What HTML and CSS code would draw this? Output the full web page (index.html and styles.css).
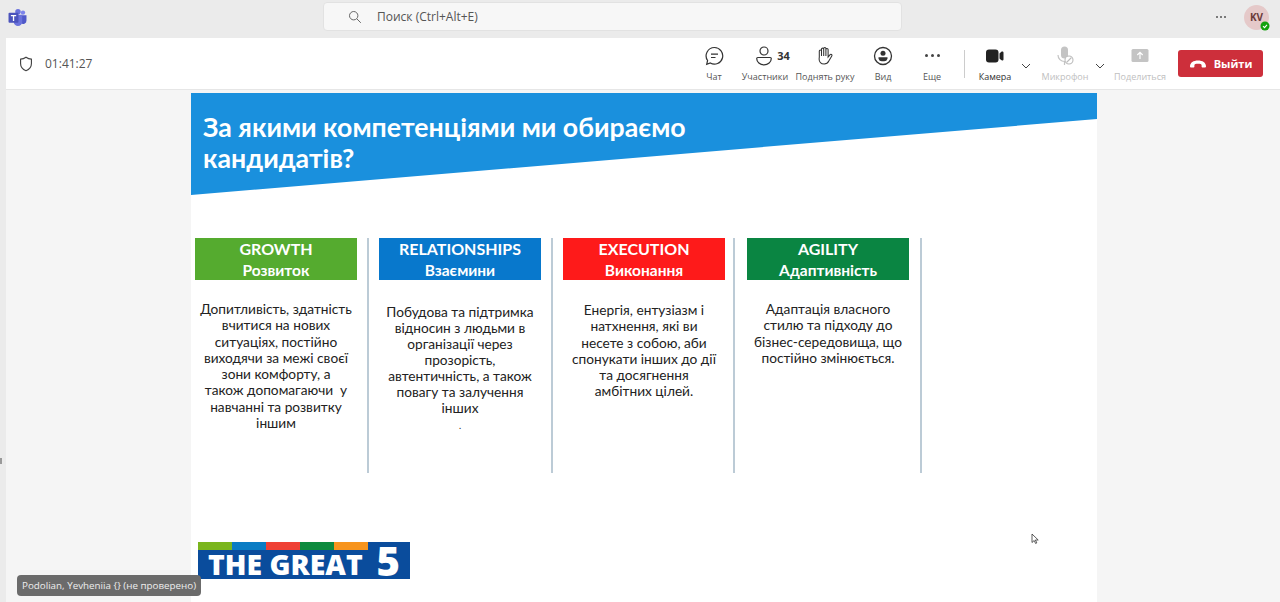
FILE: index.html
```html
<!DOCTYPE html>
<html lang="uk">
<head>
<meta charset="utf-8">
<title>Teams</title>
<link rel="stylesheet" href="styles.css">
</head>
<body>
<header class="topbar">
  <svg class="teams-logo" viewBox="0 0 20 18" width="19" height="17">
    <circle cx="15.800" cy="3.800" r="2.300" fill="#7b83eb"/>
    <circle cx="10.500" cy="3" r="2.900" fill="#6a72dc"/>
    <path d="M12 6.500h7.500v5.700a3.400 3.400 0 0 1-6 2.400z" fill="#5059c9"/>
    <path d="M6 6.200h9v7.200a4.500 4.500 0 0 1-9 0z" fill="#6a72dc"/>
    <rect x="0.500" y="4" width="10.500" height="10.500" rx="1" fill="#4b53bc"/>
    <path d="M3 6.400h5.600v1.300H6.500v4.900H5.100V7.700H3z" fill="#fff"/>
  </svg>
  <div class="search">
    <svg class="search-icon" viewBox="0 0 14 14" width="14" height="14"><circle cx="5.700" cy="5.700" r="4.200" fill="none" stroke="#666" stroke-width="1"/><path d="M8.800 8.800l4 4" stroke="#666" stroke-width="1"/></svg>
    <span>Поиск (Ctrl+Alt+E)</span>
  </div>
  <div class="top-right">
    <span class="dots"><i></i><i></i><i></i></span>
    <div class="avatar">KV
      <svg class="presence" viewBox="0 0 10 10" width="10" height="10"><circle cx="5" cy="5" r="4.500" fill="#13a10e"/><path d="M3 5.200l1.500 1.400L7 3.800" fill="none" stroke="#fff" stroke-width="1.100"/></svg>
    </div>
  </div>
</header>
<div class="main">
  <section class="content">
    <div class="toolbar">
      <div class="timer">
        <svg viewBox="0 0 16 18" width="14" height="16"><path d="M8 1.200c2 1.500 4 2.200 6.200 2.300v5c0 4-2.400 6.800-6.200 8.200-3.800-1.400-6.200-4.200-6.200-8.200v-5C4 3.400 6 2.700 8 1.200z" fill="none" stroke="#444" stroke-width="1.300"/></svg>
        <span>01:41:27</span>
      </div>
      <div class="tools">
        <div class="tool w42">
          <svg viewBox="0 0 20 20" width="20" height="20"><path d="M10.500 1.500a8.300 8.300 0 1 1-4.200 15.500l-3.600 1.300.9-3.800A8.300 8.300 0 0 1 10.500 1.500z" fill="none" stroke="#333" stroke-width="1.200"/><path d="M7 8.200h7M7 11.500h4.500" stroke="#333" stroke-width="1.200"/></svg>
          <span>Чат</span>
        </div>
        <div class="tool w60">
          <div class="people">
            <svg viewBox="0 0 20 20" width="20" height="20"><circle cx="10" cy="5" r="4" fill="none" stroke="#333" stroke-width="1.200"/><path d="M3.800 11.500h12.400c.7 0 1.100.4 1.100 1.100 0 3.500-3.300 6.200-7.300 6.200s-7.300-2.700-7.300-6.200c0-.7.400-1.100 1.100-1.100z" fill="none" stroke="#333" stroke-width="1.200"/></svg>
            <b>34</b>
          </div>
          <span>Участники</span>
        </div>
        <div class="tool w60">
          <svg viewBox="0 0 20 20" width="20" height="20"><path d="M4.300 11V5a1.100 1.100 0 0 1 2.200 0V3.200a1.100 1.100 0 0 1 2.200 0v-.6a1.100 1.100 0 0 1 2.200 0v.9a1.100 1.100 0 0 1 2.200 0v7.500l1.800-2.200c1-1.200 2.700-.1 1.900 1.200l-3 5a5.300 5.300 0 0 1-4.600 3c-3.300 0-5.100-2-5.100-5zM6.500 5v5M8.700 3.200V10M10.900 3.500V10" fill="none" stroke="#333" stroke-width="1.050"/></svg>
          <span>Поднять руку</span>
        </div>
        <div class="tool w56">
          <svg viewBox="0 0 20 20" width="20" height="20"><circle cx="10" cy="10" r="8.500" fill="none" stroke="#333" stroke-width="1.300"/><circle cx="10" cy="7.300" r="2.500" fill="#333"/><path d="M5.500 11.300h9v1.500a3.500 3.500 0 0 1-3.500 2.500H9a3.500 3.500 0 0 1-3.500-2.500z" fill="#333"/></svg>
          <span>Вид</span>
        </div>
        <div class="tool w42">
          <div class="more-icon"><i></i><i></i><i></i></div>
          <span>Еще</span>
        </div>
        <div class="sep"></div>
        <div class="tool w40 on">
          <svg viewBox="0 0 20 20" width="20" height="20"><rect x="1" y="3.500" width="12.500" height="13" rx="3" fill="#222"/><path d="M14.500 7.500l1.600-1.500c1-.8 2.400-.6 2.400.8v6.400c0 1.400-1.400 1.600-2.400.8l-1.600-1.500z" fill="#222"/></svg>
          <span>Камера</span>
        </div>
        <div class="chev w22"><svg viewBox="0 0 10 6" width="10" height="6"><path d="M1 1l4 4 4-4" fill="none" stroke="#444" stroke-width="1"/></svg></div>
        <div class="tool w56 off">
          <svg viewBox="0 0 20 20" width="20" height="20"><rect x="6" y="0.500" width="7" height="12" rx="3.500" fill="#c4c4c4"/><path d="M3 9a6.500 6.500 0 0 0 6.500 6.500V19" fill="none" stroke="#c4c4c4" stroke-width="1.200"/><circle cx="14" cy="14" r="4" fill="#fff" stroke="#bbb" stroke-width="1.100"/><path d="M11.500 16.500l5-5" stroke="#bbb" stroke-width="1.100"/></svg>
          <span>Микрофон</span>
        </div>
        <div class="chev w14"><svg viewBox="0 0 10 6" width="10" height="6"><path d="M1 1l4 4 4-4" fill="none" stroke="#444" stroke-width="1"/></svg></div>
        <div class="tool w66 off">
          <svg viewBox="0 0 20 20" width="20" height="20"><rect x="1.500" y="3" width="17" height="13" rx="1.500" fill="#c4c4c4"/><path d="M10 13V6.500M7.300 9L10 6.300 12.700 9" fill="none" stroke="#fff" stroke-width="1.200"/></svg>
          <span>Поделиться</span>
        </div>
        <button class="leave">
          <svg viewBox="0 0 18 9" width="18" height="9"><path d="M1 7.500C1 3.500 4.500 1.500 9 1.500s8 2 8 6c0 .8-.6 1-1.200 1h-2c-.7 0-1.200-.4-1.200-1V6c0-.8-1.500-1.200-3.600-1.200S5.400 5.200 5.400 6v1.500c0 .6-.5 1-1.200 1h-2C1.600 8.500 1 8.300 1 7.500z" fill="#fff"/></svg>
          <span>Выйти</span>
        </button>
      </div>
    </div>
    <div class="stage">
      <article class="slide">
        <h1 class="banner">За якими компетенціями ми обираємо<br>кандидатів?</h1>
        <div class="columns">
          <div class="col">
            <div class="card">
              <div class="head green"><strong>GROWTH</strong><em>Розвиток</em></div>
              <p class="text t1">Допитливість, здатність<br>вчитися на нових<br>ситуаціях, постійно<br>виходячи за межі своєї<br>зони комфорту, а<br>також допомагаючи&nbsp; у<br>навчанні та розвитку<br>іншим</p>
            </div>
            <div class="rule"></div>
          </div>
          <div class="col">
            <div class="card">
              <div class="head blue"><strong>RELATIONSHIPS</strong><em>Взаємини</em></div>
              <p class="text t2">Побудова та підтримка<br>відносин з людьми в<br>організації через<br>прозорість,<br>автентичність, а також<br>повагу та залучення<br>інших<br><small>.</small></p>
            </div>
            <div class="rule"></div>
          </div>
          <div class="col">
            <div class="card">
              <div class="head red"><strong>EXECUTION</strong><em>Виконання</em></div>
              <p class="text t3">Енергія, ентузіазм і<br>натхнення, які ви<br>несете з собою, аби<br>спонукати інших до дії<br>та досягнення<br>амбітних цілей.</p>
            </div>
            <div class="rule near"></div>
          </div>
          <div class="col">
            <div class="card">
              <div class="head dgreen"><strong>AGILITY</strong><em>Адаптивність</em></div>
              <p class="text t1">Адаптація власного<br>стилю та підходу до<br>бізнес-середовища, що<br>постійно змінюється.</p>
            </div>
            <div class="rule far"></div>
          </div>
        </div>
        <div class="brand">
          <div class="stripes"><i class="s1"></i><i class="s2"></i><i class="s3"></i><i class="s4"></i><i class="s5"></i></div>
          <div class="wordmark"><span>THE GREAT</span><b>5</b></div>
        </div>
        <svg class="cursor" viewBox="0 0 8 12" width="8" height="12"><path d="M1 1v8.500l2.200-2 1.400 3 1.200-.6-1.400-2.900h2.800z" fill="#fff" stroke="#333" stroke-width=".8"/></svg>
      </article>
    </div>
    <div class="tag">Podolian, Yevheniia {} (не проверено)</div>
    <i class="edge-mark"></i>
  </section>
</div>
</body>
</html>
```
FILE: styles.css
```css
* { box-sizing: border-box; }
html, body { margin: 0; height: 100%; }
body {
  width: 1280px; height: 602px; overflow: hidden;
  display: flex; flex-direction: column;
  background: #ebebeb;
  font-family: "Open Sans", "Noto Sans", sans-serif;
  color: #333;
}
.topbar { height: 38px; flex: none; display: flex; align-items: center; padding: 0 11px 4px 8px; position: relative; }
.teams-logo { flex: none; }
.search {
  position: absolute; left: 323px; top: 2px; width: 579px; height: 29px;
  background: #f7f7f7; border: 1px solid #e2e2e2; border-radius: 4px;
  display: flex; align-items: center; padding-left: 24px; gap: 15px;
  font-size: 12px; color: #555;
}
.top-right { margin-left: auto; display: flex; align-items: center; gap: 18px; }
.dots { display: flex; gap: 2px; }
.dots i { width: 2px; height: 2px; background: #555; border-radius: 50%; }
.avatar {
  position: relative; width: 25px; height: 25px; border-radius: 50%;
  background: #e5c9c9; color: #6b3b3b; font-size: 10px; font-weight: 700;
  display: flex; align-items: center; justify-content: center;
}
.presence { position: absolute; right: -1px; bottom: -1px; }
.main { flex: 1; display: flex; padding-left: 6px; min-height: 0; }
.content { flex: 1; display: flex; flex-direction: column; min-width: 0; }
.toolbar { height: 52px; flex: none; background: #fff; border-bottom: 1px solid #e6e6e6; display: flex; align-items: center; padding-left: 13px; }
.timer { display: flex; align-items: center; gap: 12px; font-size: 12px; color: #555; }
.tools { margin-left: auto; display: flex; align-items: center; height: 100%; padding: 1px 17px 0 0; }
.tool { display: flex; flex-direction: column; align-items: center; gap: 5px; font-size: 9px; color: #555; white-space: nowrap; }
.tool span { line-height: 12px; }
.tool svg { display: block; }
.w42 { width: 42px; } .w60 { width: 60px; } .w56 { width: 56px; }
.w40 { width: 40px; } .w22 { width: 22px; } .w14 { width: 14px; } .w66 { width: 66px; }
.people { display: flex; align-items: center; gap: 3px; font-size: 11px; color: #333; margin-left: 14px; }
.more-icon { height: 20px; display: flex; align-items: center; gap: 3px; }
.more-icon i { width: 3px; height: 3px; border-radius: 50%; background: #444; }
.sep { width: 22px; height: 28px; display: flex; justify-content: center; }
.sep::before { content: ""; width: 1px; background: #ccc; }
.off { color: #c0c0c0; }
.on { color: #333; }
.chev { display: flex; justify-content: center; padding-top: 4px; }
.leave {
  width: 85px; height: 27px; margin: -2px 0 0 5px; border: 0; border-radius: 3px;
  background: #cd2f3b; color: #fff;
  display: flex; align-items: center; justify-content: center; gap: 7px;
  font: 700 11px "Open Sans", sans-serif;
}
.stage { flex: 1; background: #f5f5f5; padding: 3px 0 0 185px; min-height: 0; }
.slide { width: 906px; height: 509px; background: #fff; position: relative; display: flex; flex-direction: column; font-family: Lato, "Open Sans", sans-serif; }
.banner {
  margin: 0; height: 102px; padding: 19px 0 0 12px;
  background: #1a90dd; clip-path: polygon(0 0, 100% 0, 100% 25.5%, 0 100%);
  color: #fff; font-size: 26.700px; line-height: 31px; font-weight: 700;
}
.columns { display: flex; padding: 43px 0 0 4px; height: 278px; flex: none; }
.col { width: 184px; height: 235px; display: flex; flex: none; }
.card { width: 162px; flex: none; }
.rule { width: 2px; margin-left: 10px; background: #bccbd6; }
.near { margin-left: 8px; }
.far { margin-left: 11px; }
.head { height: 42px; padding-top: 2px; color: #fff; text-align: center; display: flex; flex-direction: column; align-items: center; justify-content: center; }
.head strong { font-size: 16px; line-height: 20px; font-weight: 700; }
.head em { font-style: normal; font-size: 15.500px; line-height: 22px; font-weight: 700; }
.green { background: #55ab2f; } .blue { background: #0878cc; } .red { background: #fe1a1a; } .dgreen { background: #0a8542; }
.text { margin: 0; text-align: center; font-size: 13.700px; line-height: 16.300px; color: #222; white-space: nowrap; }
.t1 { padding-top: 21px; } .t2 { padding-top: 23.500px; line-height: 16.100px; } .t3 { padding-top: 22px; }
.text small { font-size: 9px; }
.brand { width: 212px; height: 37px; margin: 69px 0 0 7px; background: #0a4c9c; display: flex; flex-direction: column; flex: none; }
.stripes { display: flex; height: 8px; flex: none; }
.stripes i { width: 34px; }
.s1 { background: #7ab51d; } .s2 { background: #0a7cc4; } .s3 { background: #ef4135; } .s4 { background: #0d8a3e; } .s5 { background: #f7941d; }
.wordmark { flex: none; height: 29px; display: flex; align-items: center; justify-content: space-between; color: #fff; padding: 0 10px; font-weight: 800; font-size: 28.400px; line-height: 29px; font-family: "Open Sans", sans-serif; white-space: nowrap; }
.wordmark b { font-size: 40px; font-weight: 800; line-height: 29px; margin-bottom: 8px; }
.cursor { position: absolute; left: 840px; top: 440px; }
.tag {
  position: absolute; left: 17px; top: 575px; height: 21px; padding: 0 5px;
  background: #6b6b6b; border-radius: 4px; color: #eee; font-size: 9.800px; line-height: 21px; white-space: nowrap;
}
.edge-mark { position: absolute; left: 0; top: 458px; width: 2px; height: 6px; background: #999; }
```
